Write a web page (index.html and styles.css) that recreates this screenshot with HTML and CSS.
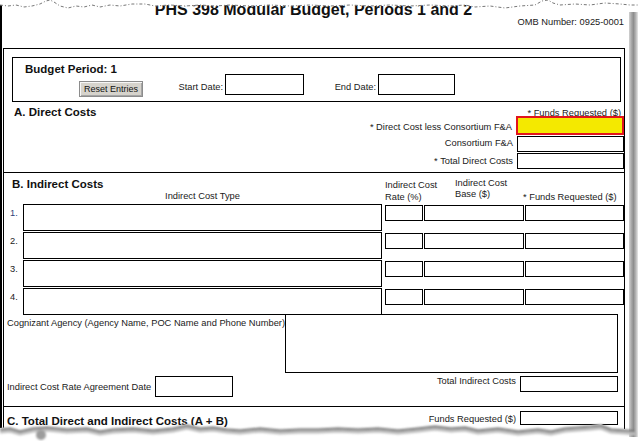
FILE: index.html
```html
<!DOCTYPE html>
<html>
<head>
<meta charset="utf-8">
<link rel="stylesheet" href="styles.css">
</head>
<body>
<div class="wrap">
  <div class="sheet">
    <header class="hdr">
      <h1 class="title">PHS 398 Modular Budget, Periods 1 and 2</h1>
      <div class="omb">OMB Number: 0925-0001</div>
    </header>
    <div class="form">
      <div class="budget">
        <div class="bp-title">Budget Period: 1</div>
        <div class="bp-row">
          <button class="btn" type="button">Reset Entries</button>
          <span class="lbl lbl-start">Start Date:</span>
          <span class="field f-date1"></span>
          <span class="lbl lbl-end">End Date:</span>
          <span class="field f-date2"></span>
        </div>
      </div>

      <section class="sec-a">
        <div class="a-head">
          <h2 class="sec-title">A. Direct Costs</h2>
          <span class="lbl">* Funds Requested ($)</span>
        </div>
        <div class="a-row a-r1"><span class="lbl">* Direct Cost less Consortium F&amp;A</span><span class="field req"></span></div>
        <div class="a-row a-r2"><span class="lbl">Consortium F&amp;A</span><span class="field a-field"></span></div>
        <div class="a-row a-r3"><span class="lbl">* Total Direct Costs</span><span class="field a-field"></span></div>
      </section>

      <section class="sec-b">
        <div class="b-grid b-head">
          <div class="b-title-cell">
            <h2 class="sec-title b-title">B. Indirect Costs</h2>
            <div class="lbl type-lbl">Indirect Cost Type</div>
          </div>
          <div class="lbl rate-lbl">Indirect Cost<br>Rate (%)</div>
          <div class="lbl base-lbl">Indirect Cost<br>Base ($)</div>
          <div class="lbl funds-lbl">* Funds Requested ($)</div>
        </div>
        <div class="b-grid b-rows">
          <span class="lbl num num-1">1.</span><span class="field type-box"></span><span class="field rate-box"></span><span class="field base-box"></span><span class="field funds-box"></span>
          <span class="lbl num">2.</span><span class="field type-box"></span><span class="field rate-box"></span><span class="field base-box"></span><span class="field funds-box"></span>
          <span class="lbl num">3.</span><span class="field type-box"></span><span class="field rate-box"></span><span class="field base-box"></span><span class="field funds-box"></span>
          <span class="lbl num">4.</span><span class="field type-box"></span><span class="field rate-box"></span><span class="field base-box"></span><span class="field funds-box"></span>
        </div>
        <div class="cog">
          <span class="lbl cog-lbl">Cognizant Agency (Agency Name, POC Name and Phone Number)</span>
          <span class="field cog-box"></span>
        </div>
        <div class="agree">
          <span class="lbl agree-lbl">Indirect Cost Rate Agreement Date</span>
          <span class="field agree-box"></span>
          <span class="lbl total-lbl">Total Indirect Costs</span>
          <span class="field total-box"></span>
        </div>
      </section>

      <section class="sec-c">
        <h2 class="sec-title c-title">C. Total Direct and Indirect Costs (A + B)</h2>
        <span class="lbl c-lbl">Funds Requested ($)</span>
        <span class="field c-box"></span>
      </section>
    </div>
  </div>
  <div class="shadow"></div>
</div>

<svg class="tear-top" width="638" height="12" viewBox="0 0 638 12">
  <path d="M0,0 H638 V5 L630,5 620,4 605,3 590,5 575,4 560,5 553,3 548,0 542,1 535,5 520,6 505,8 490,6 475,7 465,5 450,6 430,5 410,6 390,5 370,6 350,5 330,6 310,5 290,6 270,5 250,6 230,5 215,6 200,5 185,6 170,5 155,6 145,4 132,4 120,6 110,5 100,7 92,5 84,7 76,6 68,8 60,6 54,2 50,0 46,1 40,4 32,6 24,7 16,5 8,6 0,5 Z" fill="#fff"/>
  <polyline points="0,5 8,6 16,5 24,7 32,6 40,4 46,1 50,0 54,2 60,6 68,8 76,6 84,7 92,5 100,7 110,5 120,6 132,4 145,4 155,6 170,5 185,6 200,5 215,6 230,5 250,6 270,5 290,6 310,5 330,6 350,5 370,6 390,5 410,6 430,5 450,6 465,5 475,7 490,6 505,8 520,6 535,5 542,1 548,0 553,3 560,5 575,4 590,5 605,3 620,4 630,5 638,5" fill="none" stroke="#777" stroke-width="1" stroke-dasharray="3 2 1 2"/>
</svg>

<svg class="tear-bottom" width="638" height="23" viewBox="0 418 638 23">
  <defs>
    <filter id="blur" x="-5%" y="-50%" width="110%" height="200%"><feGaussianBlur stdDeviation="0.9"/></filter>
  </defs>
  <polygon fill="#fff" points="0,428 10,427 20,430 33,427 47,426 67,428 87,427 100,430 113,428 133,427 153,429 173,427 187,424 200,427 213,426 227,428 240,429 260,427 280,429 300,428 318,428 338,427 358,428 378,427 398,429 418,427 435,425 451,427 465,426 478,429 498,427 518,430 538,428 551,430 565,427 578,426 591,425 601,424 611,428 625,429 629,430 629,441 0,441"/>
  <g filter="url(#blur)">
    <polyline fill="none" stroke="#bdbdbd" stroke-width="3" points="0,432 10,431 20,434 33,431 47,430 67,432 87,431 100,434 113,432 133,431 153,433 173,431 187,428 200,431 213,430 227,432 240,433 260,431 280,433 300,432 318,432 338,431 358,432 378,431 398,433 418,431 435,429 451,431 465,430 478,433 498,431 518,434 538,432 551,434 565,431 578,430 591,429 601,428 611,432 625,433 636,434"/>
    <polyline fill="none" stroke="#6f6f6f" stroke-width="2" points="0,429.5 10,428.5 20,431.5 33,428.5 47,427.5 67,429.5 87,428.5 100,431.5 113,429.5 133,428.5 153,430.5 173,428.5 187,425.5 200,428.5 213,427.5 227,429.5 240,430.5 260,428.5 280,430.5 300,429.5 318,429.5 338,428.5 358,429.5 378,428.5 398,430.5 418,428.5 435,426.5 451,428.5 465,427.5 478,430.5 498,428.5 518,431.5 538,429.5 551,431.5 565,428.5 578,427.5 591,426.5 601,425.5 611,429.5 625,430.5 634,431"/>
    <ellipse cx="41" cy="435" rx="5" ry="5" fill="#9c9c9c"/>
  </g>
</svg>
</body>
</html>
```

FILE: styles.css
```css
html, body {
  margin: 0;
  padding: 0;
}

body {
  width: 638px;
  height: 441px;
  overflow: hidden;
  position: relative;
  background: #fff;
  font-family: "Liberation Sans", Arial, sans-serif;
  color: #1a1a1a;
}

.wrap {
  display: flex;
  align-items: flex-start;
}

.sheet {
  width: 629px;
  height: 441px;
  box-sizing: border-box;
  border-left: 2px solid #000;
  overflow: hidden;
}

.shadow {
  width: 9px;
  height: 425px;
  margin-top: 12px;
  background: linear-gradient(to right, #d2d2d2 0%, #a4a4a4 30%, #8e8e8e 50%, #b4b4b4 75%, #e8e8e8 100%);
}

/* header */
.hdr {
  height: 48px;
  box-sizing: border-box;
  padding-top: 1px;
}

.title {
  margin: 0;
  padding-right: 4px;
  font-size: 16px;
  line-height: 18px;
  font-weight: 700;
  text-align: center;
  color: #111;
}

.omb {
  margin-top: -2px;
  padding-right: 5px;
  font-size: 9.3px;
  line-height: 11px;
  text-align: right;
}

/* generic */
.lbl {
  font-size: 9.3px;
  line-height: 11px;
  white-space: nowrap;
}

.field {
  display: block;
  box-sizing: border-box;
  border: 1px solid #000;
  background: #fff;
}

.sec-title {
  margin: 0;
  font-size: 11.5px;
  line-height: 14px;
  font-weight: 700;
  color: #111;
  white-space: nowrap;
}

/* form frame */
.form {
  margin-left: 1px;
  width: 622px;
  height: 393px;
  box-sizing: border-box;
  border: 1px solid #000;
  border-bottom: 0;
}

/* budget period box */
.budget {
  margin: 8px 0 0 8px;
  width: 609px;
  height: 45px;
  box-sizing: border-box;
  border: 1px solid #000;
  padding: 4px 0 0 12px;
}

.bp-title {
  font-size: 11.5px;
  line-height: 14px;
  font-weight: 700;
  color: #111;
}

.bp-row {
  display: flex;
  align-items: flex-start;
  height: 23px;
  margin-top: -2px;
}

.btn {
  margin: 7px 0 0 54px;
  width: 64px;
  height: 16px;
  padding: 0;
  font-family: "Liberation Sans", Arial, sans-serif;
  font-size: 9px;
  line-height: 14px;
  color: #111;
  background: #d6d3cc;
  border: 1px solid #8c8c8c;
  box-shadow: inset 1px 1px #f6f6f6, inset -1px -1px #a6a6a6;
}

.lbl-start {
  width: 47px;
  margin: 8px 0 0 33px;
  text-align: right;
}

.f-date1 {
  margin-left: 2px;
  width: 79px;
  height: 21px;
}

.lbl-end {
  width: 72px;
  margin-top: 8px;
  text-align: right;
}

.f-date2 {
  margin-left: 2px;
  width: 77px;
  height: 21px;
}

/* section A */
.sec-a {
  height: 70px;
  box-sizing: content-box;
  border-bottom: 1px solid #000;
  display: flex;
  flex-direction: column;
}

.a-head {
  display: flex;
  justify-content: space-between;
  align-items: baseline;
  height: 11px;
  margin-top: 3px;
  padding: 0 3px 0 10px;
}

.a-row {
  display: flex;
  justify-content: flex-end;
  align-items: center;
}

.a-row .lbl {
  margin-right: 4px;
}

.a-r1 {
  height: 19px;
}

.a-r1 .lbl {
  padding-top: 3px;
}

.req {
  width: 108px;
  height: 19px;
  border: 2px solid #e2141c;
  background: #f4e900;
}

.a-r2,
.a-r3 {
  margin-top: 1px;
  height: 16px;
}

.a-r2 .lbl {
  padding-bottom: 1px;
}

.a-field {
  width: 107px;
  height: 16px;
}

/* section B */
.sec-b {
  height: 233px;
  border-bottom: 1px solid #000;
}

.b-grid {
  display: grid;
  grid-template-columns: 19px 362px 39px 101px 99px;
}

.b-head {
  padding-top: 4px;
  align-items: start;
}

.b-title-cell {
  grid-column: 1 / 3;
}

.b-title {
  padding-left: 8px;
}

.type-lbl {
  margin-left: 19px;
  width: 359px;
  text-align: center;
}

.rate-lbl {
  margin-top: 2px;
  line-height: 12px;
}

.base-lbl {
  margin-top: 1px;
  padding-left: 31px;
}

.funds-lbl {
  align-self: end;
  margin-left: -2px;
}

.b-rows {
  margin-top: 1px;
  grid-auto-rows: 27px;
  row-gap: 1px;
  align-items: start;
}

.num {
  padding: 4px 0 0 6px;
  color: #222;
}

.num-1 {
  color: #2f3f78;
}

.type-box {
  width: 359px;
  height: 27px;
}

.rate-box,
.base-box,
.funds-box {
  margin-top: 1px;
  height: 16px;
}

.rate-box {
  width: 38px;
}

.base-box {
  width: 100px;
}

.funds-box {
  width: 99px;
}

.cog {
  display: flex;
  align-items: flex-start;
  margin-top: -1px;
}

.cog-lbl {
  padding: 4px 0 0 3px;
}

.cog-box {
  margin: 0 6px 0 auto;
  width: 333px;
  height: 59px;
}

.agree {
  display: flex;
  align-items: flex-start;
  margin-top: 3px;
  height: 21px;
}

.agree-lbl {
  width: 151px;
  box-sizing: border-box;
  padding-left: 3px;
  margin-top: 6px;
}

.agree-box {
  width: 78px;
  height: 21px;
}

.total-lbl {
  margin: 0 4px 0 auto;
}

.total-box {
  width: 98px;
  height: 16px;
  margin-right: 6px;
}

/* section C */
.sec-c {
  display: flex;
  align-items: flex-start;
  height: 30px;
}

.c-title {
  margin-top: 7px;
  padding-left: 3px;
}

.c-lbl {
  margin: 7px 4px 0 auto;
}

.c-box {
  margin: 4px 6px 0 0;
  width: 98px;
  height: 14px;
}

/* torn paper overlays */
.tear-top {
  position: absolute;
  left: 0;
  top: 0;
  display: block;
}

.tear-bottom {
  position: absolute;
  left: 0;
  top: 418px;
  display: block;
}
```
